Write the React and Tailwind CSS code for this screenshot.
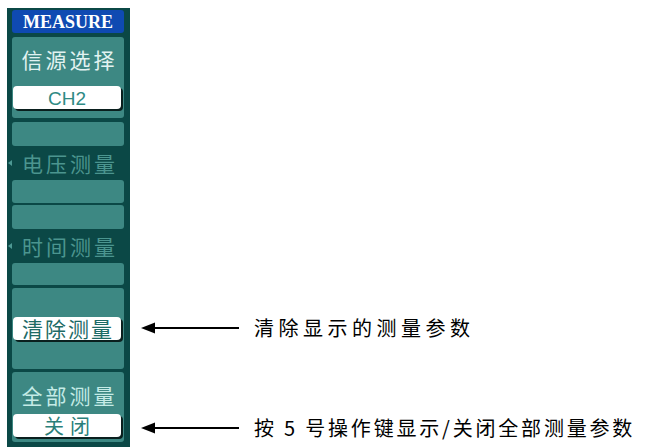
import React from 'react';

const cjk = { fontFamily: '"Noto Sans CJK SC", "Noto Sans", sans-serif' };

function Arrow() {
  return (
    <svg width="98" height="12" viewBox="0 0 98 12" className="shrink-0">
      <polygon points="0,6 14,0.5 14,11.5" fill="#000" />
      <rect x="10" y="5" width="88" height="2" fill="#000" />
    </svg>
  );
}

function SoftKey({ children, textClass }) {
  return (
    <div className="mx-[1px] h-[23px] w-[108px] rounded-[4px] bg-white shadow-[2px_2px_0_#0a1f1e] flex items-center justify-center">
      <span className={textClass}>{children}</span>
    </div>
  );
}

function SubLabel({ children }) {
  return (
    <div className="-ml-[4px] h-[34px] flex items-center" style={cjk}>
      <span className="w-0 h-0 border-y-[3px] border-y-transparent border-r-[4px] border-r-[#4d9994] mr-[10px]" />
      <span className="text-[21px] tracking-[3px] text-[#4b958f] leading-none">{children}</span>
    </div>
  );
}

export default function App() {
  return (
    <div className="w-[651px] h-[447px] bg-white flex overflow-hidden">
      {/* menu panel */}
      <div className="ml-[7px] mt-[8px] w-[123px] bg-[#0b4846] pl-[5px] pr-[6px] pt-[2px] flex flex-col">
        <div className="h-[23px] rounded-[3px] bg-[#0f4ab2] flex items-center justify-center">
          <span className="text-white text-[18px] font-bold leading-none" style={{ fontFamily: '"Liberation Serif", "DejaVu Serif", serif' }}>MEASURE</span>
        </div>

        {/* 信源选择 */}
        <div className="mt-[4px] h-[81px] rounded-[3px] bg-[#3d8883] flex flex-col" style={cjk}>
          <div className="h-[44px] flex items-center justify-center pl-[3px]">
            <span className="text-[21px] tracking-[3px] text-[#e2f3f1] leading-none">信源选择</span>
          </div>
          <div className="mt-[5px]">
            <SoftKey textClass="text-[19px] leading-none text-[#2e8a84]">
              <span style={{ fontFamily: '"Liberation Sans", Arial, sans-serif' }}>CH2</span>
            </SoftKey>
          </div>
        </div>

        {/* 电压测量 / 时间测量 */}
        <div className="mt-[4px] h-[24px] rounded-[3px] bg-[#3d8883]" />
        <SubLabel>电压测量</SubLabel>
        <div className="h-[23px] rounded-[3px] bg-[#3d8883]" />
        <div className="mt-[2px] h-[24px] rounded-[3px] bg-[#3d8883]" />
        <SubLabel>时间测量</SubLabel>
        <div className="h-[22px] rounded-[3px] bg-[#3d8883]" />

        {/* 清除测量 */}
        <div className="mt-[3px] h-[81px] rounded-[3px] bg-[#3d8883] pt-[29px]" style={cjk}>
          <SoftKey textClass="text-[21px] tracking-[2px] pl-[2px] leading-none text-[#1d6a65]">清除测量</SoftKey>
        </div>

        {/* 全部测量 */}
        <div className="mt-[3px] h-[70px] rounded-[3px] bg-[#3d8883] flex flex-col" style={cjk}>
          <div className="h-[42px] flex items-center justify-center pt-[4px] pl-[3px]">
            <span className="text-[21px] tracking-[3px] text-[#c4ebe6] leading-none">全部测量</span>
          </div>
          <SoftKey textClass="text-[20px] tracking-[6px] pl-[6px] leading-none text-[#2a7f7a]">关闭</SoftKey>
        </div>
      </div>

      {/* annotations */}
      <div className="ml-[11px] pt-[318px] flex flex-col gap-[80px]" style={{ fontFamily: '"Noto Sans CJK SC", "Liberation Serif", serif' }}>
        <div className="h-[20px] flex items-center">
          <Arrow />
          <span className="ml-[15px] text-[20px] tracking-[4.5px] text-black leading-none whitespace-nowrap">清除显示的测量参数</span>
        </div>
        <div className="h-[20px] flex items-center">
          <Arrow />
          <span className="ml-[15px] text-[20px] tracking-[2.8px] text-black leading-none whitespace-nowrap">按 5 号操作键显示/关闭全部测量参数</span>
        </div>
      </div>
    </div>
  );
}
